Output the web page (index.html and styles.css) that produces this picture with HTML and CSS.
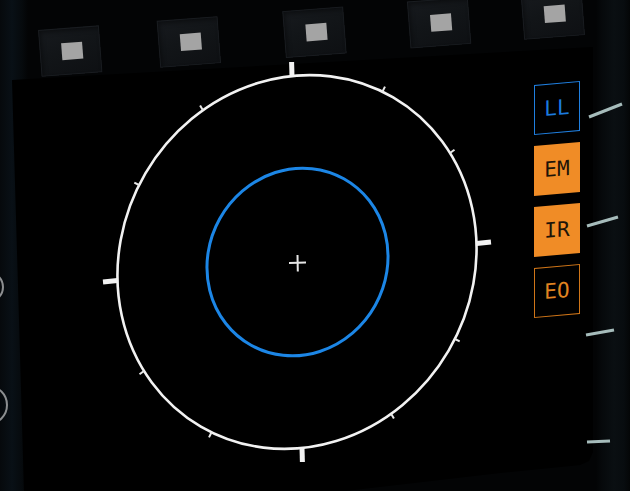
FILE: index.html
```html
<!DOCTYPE html>
<html lang="en">
<head>
<meta charset="utf-8">
<title>MFD</title>
<link rel="stylesheet" href="styles.css">
</head>
<body>
<div class="frame">
  <div class="screen"></div>
  <div class="osb-row">
    <div class="osb osb-1"><span class="lamp"></span></div>
    <div class="osb osb-2"><span class="lamp"></span></div>
    <div class="osb osb-3"><span class="lamp"></span></div>
    <div class="osb osb-4"><span class="lamp"></span></div>
    <div class="osb osb-5"><span class="lamp"></span></div>
  </div>
  <svg class="scope" width="630" height="491" viewBox="0 0 630 491" aria-hidden="true">
    <!-- bezel knobs -->
    <circle class="knob" cx="-12" cy="287" r="15"/>
    <circle class="knob" cx="-12" cy="405" r="19"/>
    <!-- bezel gauge marks -->
    <line class="gauge" x1="589" y1="117" x2="622" y2="104"/>
    <line class="gauge" x1="587" y1="226" x2="618" y2="217"/>
    <line class="gauge" x1="586" y1="335" x2="614" y2="330"/>
    <line class="gauge" x1="587" y1="442" x2="610" y2="441"/>
    <!-- outer range ring -->
    <ellipse class="ring" cx="0" cy="0" rx="175.6" ry="190.6" transform="translate(297 262) rotate(30.3)"/>
    <line class="major" x1="292" y1="76" x2="291.6" y2="62"/>
    <line class="major" x1="302" y1="448" x2="302.4" y2="462"/>
    <line class="major" x1="117.5" y1="280.5" x2="103" y2="282"/>
    <line class="major" x1="476.5" y1="243.5" x2="491" y2="242"/>
    <line class="minor" x1="382.4" y1="91.7" x2="385" y2="86.6"/>
    <line class="minor" x1="450" y1="153" x2="454.5" y2="149.7"/>
    <line class="minor" x1="455" y1="339" x2="459.7" y2="341.3"/>
    <line class="minor" x1="391.1" y1="413.8" x2="393.9" y2="418.4"/>
    <line class="minor" x1="211.6" y1="432.3" x2="209" y2="437.4"/>
    <line class="minor" x1="144" y1="371" x2="139.5" y2="374.3"/>
    <line class="minor" x1="139" y1="185" x2="134.3" y2="182.7"/>
    <line class="minor" x1="202.9" y1="110.2" x2="200.1" y2="105.6"/>
    <!-- inner ring -->
    <ellipse class="inner" cx="0" cy="0" rx="89" ry="95.3" transform="translate(297.5 262) rotate(29.1)"/>
    <!-- centre cross -->
    <line class="cross" x1="289" y1="263" x2="306" y2="262.5"/>
    <line class="cross" x1="297.5" y1="255" x2="297.8" y2="271.5"/>
  </svg>
  <div class="modes">
    <div class="mode mode-ll">LL</div>
    <div class="mode mode-em">EM</div>
    <div class="mode mode-ir">IR</div>
    <div class="mode mode-eo">EO</div>
  </div>
</div>
</body>
</html>
```

FILE: styles.css
```css
html, body {
  margin: 0;
  padding: 0;
  background: #000;
}

.frame {
  display: grid;
  width: 630px;
  height: 491px;
  overflow: hidden;
  background:
    linear-gradient(90deg, #06090c 0px, #091016 12px, #060a0d 22px, rgba(0,0,0,0) 28px, rgba(0,0,0,0) 596px, #06090b 602px, #0a0f12 614px, #080c0f 624px, #040607 630px),
    #030405;
}

.frame > * {
  grid-area: 1 / 1;
}

.screen {
  z-index: 0;
  background: #000;
  clip-path: polygon(12px 80px, 593px 47px, 593px 452px, 589px 461px, 580px 465px, 500px 473px, 345px 491px, 24px 491px);
}

.osb-row {
  z-index: 1;
  align-self: start;
  justify-self: start;
  display: flex;
  margin: 30px 0 0 38px;
  transform: rotate(-4.4deg);
  transform-origin: 0 0;
}

.osb {
  width: 61px;
  height: 47px;
  box-sizing: border-box;
  display: flex;
  align-items: center;
  justify-content: center;
  background: linear-gradient(160deg, #171a1e 0%, #121518 45%, #0e1013 100%);
  box-shadow: inset 0 0 0 1px #191c20, inset 2px 3px 5px rgba(0, 0, 0, 0.45);
}

.osb-2 { margin-left: 58px; }
.osb-3 { margin-left: 65px; }
.osb-4 { margin-left: 64px; }
.osb-5 { margin-left: 53px; }

.lamp {
  width: 21px;
  height: 17px;
  background: #a4a4a4;
  margin-left: 3px;
}

.scope {
  z-index: 2;
  display: block;
}

.knob {
  fill: none;
  stroke: #8c8e90;
  stroke-width: 2;
}

.gauge {
  stroke: #a6bcbb;
  stroke-width: 3;
}

.ring {
  fill: none;
  stroke: #f2f2f2;
  stroke-width: 2.6;
}

.major {
  stroke: #f2f2f2;
  stroke-width: 5;
}

.minor {
  stroke: #e8e8e8;
  stroke-width: 2;
}

.inner {
  fill: none;
  stroke: #1c86e6;
  stroke-width: 3;
}

.cross {
  stroke: #e6e6e6;
  stroke-width: 2;
}

.modes {
  z-index: 3;
  align-self: start;
  justify-self: start;
  margin: 85px 0 0 534px;
  display: flex;
  flex-direction: column;
  gap: 11px;
  transform: skewY(-5deg);
  transform-origin: 0 0;
}

.mode {
  width: 46px;
  height: 50px;
  box-sizing: border-box;
  display: flex;
  align-items: center;
  justify-content: center;
  font-family: "DejaVu Sans Mono", "Liberation Mono", monospace;
  font-size: 21px;
  line-height: 1;
}

.mode-ll {
  border: 1px solid #1f7fe0;
  color: #1b7ade;
}

.mode-em,
.mode-ir {
  background: #f08c26;
  color: #1d1408;
}

.mode-eo {
  border: 1px solid #cf7518;
  color: #e08420;
}
```
